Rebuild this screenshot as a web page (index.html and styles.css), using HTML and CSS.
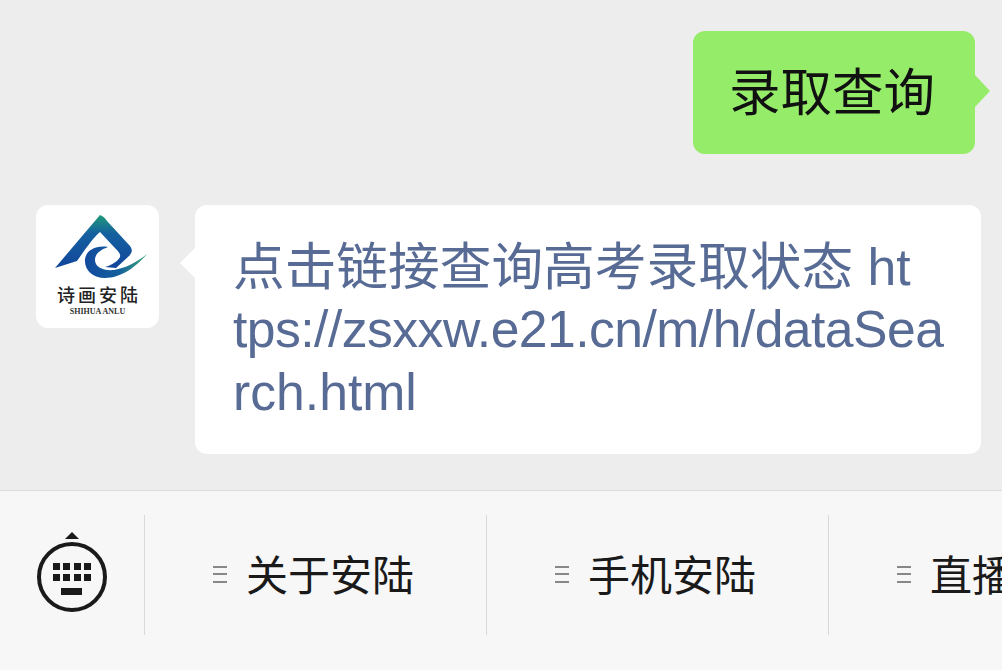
FILE: index.html
```html
<!DOCTYPE html>
<html lang="en">
<head>
  <meta charset="UTF-8">
  <meta name="viewport" content="width=device-width, initial-scale=1.0">
  <title>Chat</title>
  <link rel="stylesheet" href="styles.css">
</head>
<body>
 <div class="chat">
  <div class="row-sent">
    <div class="bubble-sent">录取查询</div>
  </div>
  <div class="row-received">
    <div class="avatar">
      <svg class="logo" viewBox="0 0 123 82" width="123" height="82">
        <defs>
          <linearGradient id="logoFill" x1="0" y1="0" x2="0" y2="1">
            <stop offset="0" stop-color="#1f9a78"/>
            <stop offset="0.35" stop-color="#14609f"/>
            <stop offset="1" stop-color="#12469c"/>
          </linearGradient>
          <linearGradient id="swooshFill" x1="0" y1="0" x2="1" y2="0">
            <stop offset="0" stop-color="#124a9e"/>
            <stop offset="0.55" stop-color="#135f9c"/>
            <stop offset="1" stop-color="#3fa77a"/>
          </linearGradient>
        </defs>
        <path fill="url(#logoFill)" d="M64 10 C67 11 69 13 71 16 L94 41 C97 45 96 48 93 51 L80 63 L69 62 C76 60 82 56 84 52 C85 49 82 46 78 42 L64 27 C57 33 50 43 41 56 L19 63 Z"/>
        <path fill="url(#swooshFill)" d="M72 42 C59 40 50 46 49 54 C48 65 57 73 69 73 C85 73 100 62 111 49 C101 57 90 63 78 65 C67 66 59 62 59 55 C59 49 64 45 72 42 Z"/>
      </svg>
      <div class="logo-name">诗画安陆</div>
      <div class="logo-sub">SHIHUA ANLU</div>
    </div>
    <div class="bubble-received">点击链接查询高考录取状态 ht<br><span class="url-line">tps://zsxxw.e21.cn/m/h/dataSea</span><br>rch.html</div>
  </div>
 </div>

 <div class="menu-bar">
  <div class="keyboard-btn">
    <svg viewBox="0 0 74 86" width="74" height="86">
      <path fill="#1a1a1a" d="M37 0 L44 7 L30 7 Z"/>
      <circle cx="37" cy="45" r="33" fill="none" stroke="#1a1a1a" stroke-width="4"/>
      <g fill="#1a1a1a">
        <rect x="18" y="31" width="7" height="7"/>
        <rect x="28" y="31" width="7" height="7"/>
        <rect x="39" y="31" width="7" height="7"/>
        <rect x="49" y="31" width="7" height="7"/>
        <rect x="18" y="42" width="7" height="7"/>
        <rect x="28" y="42" width="7" height="7"/>
        <rect x="39" y="42" width="7" height="7"/>
        <rect x="49" y="42" width="7" height="7"/>
        <rect x="26" y="56" width="21" height="7"/>
      </g>
    </svg>
  </div>
  <div class="menu-item"><span class="menu-lines"></span>关于安陆</div>
  <div class="menu-item"><span class="menu-lines"></span>手机安陆</div>
  <div class="menu-item"><span class="menu-lines"></span>直播安陆</div>
 </div>
</body>
</html>
```

FILE: styles.css
```css
body {
  margin: 0;
  padding: 0;
  width: 1002px;
  height: 670px;
  overflow: hidden;
  background-color: #ededed;
  font-family: "Liberation Sans", "Noto Sans CJK SC", sans-serif;
}

.chat {
  height: 490px;
  box-sizing: border-box;
  padding-top: 31px;
}

.row-sent {
  display: flex;
  justify-content: flex-end;
  padding-right: 27px;
  margin-bottom: 51px;
}

.bubble-sent {
  position: relative;
  width: 282px;
  height: 123px;
  box-sizing: border-box;
  padding-left: 36px;
  line-height: 124px;
  font-size: 51.5px;
  color: #111;
  background-color: #95ec69;
  border-radius: 12px;
}

.bubble-sent::after {
  content: "";
  position: absolute;
  top: 44px;
  right: -15px;
  width: 0;
  height: 0;
  border-top: 16px solid transparent;
  border-bottom: 16px solid transparent;
  border-left: 15px solid #95ec69;
}

.row-received {
  display: flex;
  align-items: flex-start;
  gap: 36px;
  padding-left: 36px;
}

.avatar {
  width: 123px;
  height: 123px;
  background-color: #fff;
  border-radius: 12px;
  text-align: center;
  overflow: hidden;
}

.logo {
  display: block;
}

.logo-name {
  margin-top: -3px;
  padding-left: 3px;
  font-family: "Noto Sans CJK SC", sans-serif;
  font-size: 18px;
  font-weight: 500;
  line-height: 20px;
  letter-spacing: 3px;
  color: #222;
}

.logo-sub {
  margin-top: 3px;
  font-family: "Liberation Serif", serif;
  font-size: 8px;
  font-weight: 700;
  line-height: 9px;
  color: #333;
}

.bubble-received {
  position: relative;
  width: 786px;
  height: 249px;
  box-sizing: border-box;
  padding: 31px 0 0 38px;
  font-size: 51.7px;
  line-height: 62.3px;
  color: #576b95;
  background-color: #fff;
  border-radius: 12px;
  white-space: nowrap;
}

.url-line {
  letter-spacing: -0.55px;
}

.bubble-received::before {
  content: "";
  position: absolute;
  top: 43px;
  left: -15px;
  width: 0;
  height: 0;
  border-top: 15px solid transparent;
  border-bottom: 15px solid transparent;
  border-right: 15px solid #fff;
}

.menu-bar {
  display: flex;
  height: 180px;
  box-sizing: border-box;
  padding-top: 24px;
  background-color: #f7f7f7;
  border-top: 1px solid #dcdcdc;
}

.keyboard-btn {
  flex: 0 0 144px;
  height: 120px;
  display: flex;
  justify-content: center;
  align-items: center;
  border-right: 1px solid #d9d9d9;
}

.menu-item {
  flex: 0 0 341px;
  height: 114px;
  padding-bottom: 6px;
  display: flex;
  align-items: center;
  border-right: 1px solid #d9d9d9;
  font-size: 42px;
  color: #1a1a1a;
  white-space: nowrap;
}

.menu-lines {
  width: 14px;
  height: 17px;
  box-sizing: border-box;
  margin: 4px 19px 0 68px;
  border-top: 2px solid #888;
  border-bottom: 2px solid #888;
  background: linear-gradient(#888, #888) center / 100% 2px no-repeat;
}
```
